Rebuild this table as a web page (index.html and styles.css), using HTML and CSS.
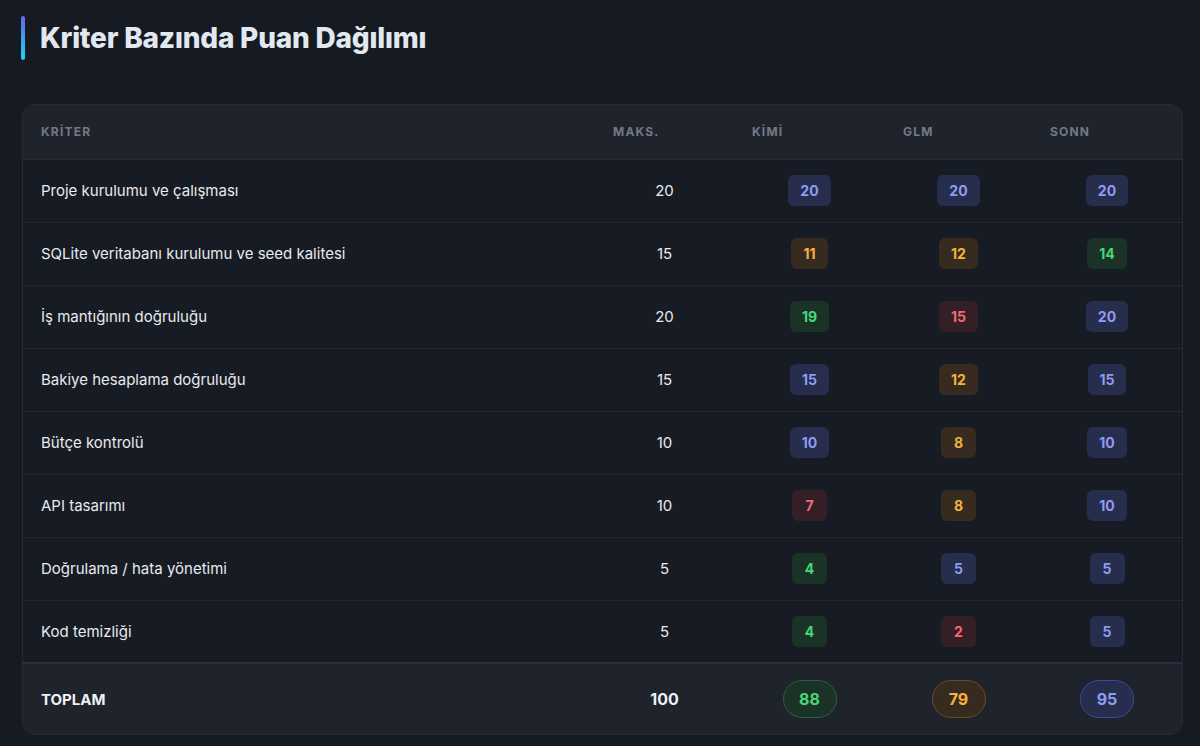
FILE: index.html
```html
<!DOCTYPE html>
<html lang="tr">
<head>
<meta charset="utf-8">
<link rel="stylesheet" href="styles.css">
</head>
<body>
<div class="page">
  <h1 class="title">Kriter Bazında Puan Dağılımı</h1>
  <div class="card">
    <table class="scores">
      <colgroup>
        <col class="c-name"><col class="c-max"><col class="c-m1"><col class="c-m2"><col class="c-m3">
      </colgroup>
      <thead>
        <tr><th>KRİTER</th><th>MAKS.</th><th>KİMİ</th><th>GLM</th><th>SONN</th></tr>
      </thead>
      <tbody>
        <tr><td>Proje kurulumu ve çalışması</td><td class="num">20</td><td class="num"><span class="b blue">20</span></td><td class="num"><span class="b blue">20</span></td><td class="num"><span class="b blue">20</span></td></tr>
        <tr><td>SQLite veritabanı kurulumu ve seed kalitesi</td><td class="num">15</td><td class="num"><span class="b orange">11</span></td><td class="num"><span class="b orange">12</span></td><td class="num"><span class="b green">14</span></td></tr>
        <tr><td>İş mantığının doğruluğu</td><td class="num">20</td><td class="num"><span class="b green">19</span></td><td class="num"><span class="b red">15</span></td><td class="num"><span class="b blue">20</span></td></tr>
        <tr><td>Bakiye hesaplama doğruluğu</td><td class="num">15</td><td class="num"><span class="b blue">15</span></td><td class="num"><span class="b orange">12</span></td><td class="num"><span class="b blue">15</span></td></tr>
        <tr><td>Bütçe kontrolü</td><td class="num">10</td><td class="num"><span class="b blue">10</span></td><td class="num"><span class="b orange">8</span></td><td class="num"><span class="b blue">10</span></td></tr>
        <tr><td>API tasarımı</td><td class="num">10</td><td class="num"><span class="b red">7</span></td><td class="num"><span class="b orange">8</span></td><td class="num"><span class="b blue">10</span></td></tr>
        <tr><td>Doğrulama / hata yönetimi</td><td class="num">5</td><td class="num"><span class="b green">4</span></td><td class="num"><span class="b blue">5</span></td><td class="num"><span class="b blue">5</span></td></tr>
        <tr><td>Kod temizliği</td><td class="num">5</td><td class="num"><span class="b green">4</span></td><td class="num"><span class="b red">2</span></td><td class="num"><span class="b blue">5</span></td></tr>
      </tbody>
      <tfoot>
        <tr><td class="total-label">TOPLAM</td><td class="num total-max">100</td><td class="num"><span class="pill green">88</span></td><td class="num"><span class="pill orange">79</span></td><td class="num"><span class="pill blue">95</span></td></tr>
      </tfoot>
    </table>
  </div>
</div>
</body>
</html>
```

FILE: styles.css
```css
* { box-sizing: border-box; }
html, body { margin: 0; padding: 0; }
body {
  background: #161a22;
  font-family: Inter, "Noto Sans", sans-serif;
  color: #e5e7eb;
}
.page {
  padding: 16px 17px 0 22px;
}
.title {
  margin: 0;
  position: relative;
  padding-left: 18px;
  font-size: 28px;
  line-height: 44px;
  font-weight: 800;
  letter-spacing: -0.2px;
  color: #e2e8f0;
}
.title::before {
  content: "";
  position: absolute;
  left: -1px;
  top: 0;
  width: 4px;
  height: 44px;
  border-radius: 2px;
  background: linear-gradient(180deg, #6366f1, #22d3ee);
}
.card {
  margin-top: 44px;
  width: 1161px;
  border: 1px solid #262b36;
  border-radius: 12px;
  overflow: hidden;
  background: #171b23;
}
.scores {
  width: 100%;
  border-collapse: collapse;
  table-layout: fixed;
}
.c-name { width: 572px; }
.c-max { width: 139px; }
.c-m1 { width: 151px; }
.c-m2 { width: 147px; }
.c-m3 { width: 150px; }
.scores th {
  background: #1f232c;
  height: 54px;
  padding: 0 18px;
  text-align: left;
  font-size: 12px;
  font-weight: 700;
  letter-spacing: 1.2px;
  color: #737987;
  border-bottom: 1px solid #262b36;
}
.scores tbody td {
  height: 63px;
  padding: 0 18px;
  font-size: 15px;
  color: #e8eaee;
  border-bottom: 1px solid #222731;
}
.scores tbody tr:last-child td { border-bottom: none; }
.scores td.num { text-align: center; }
.b {
  display: inline-block;
  min-width: 35px;
  height: 31px;
  line-height: 31px;
  padding: 0 12px;
  border-radius: 6px;
  font-size: 14px;
  font-weight: 700;
}
.b.blue, .pill.blue { background: #262d4d; color: #8e9cf0; }
.b.orange, .pill.orange { background: #372b20; color: #f5b23c; }
.b.green, .pill.green { background: #1b3327; color: #4ad57b; }
.b.red, .pill.red { background: #351f26; color: #f06a72; }
.scores tfoot td {
  background: #1f232c;
  height: 71px;
  padding: 0 18px;
  border-top: 2px solid #2a303c;
}
.total-label {
  font-size: 15px;
  font-weight: 700;
  color: #eef0f4;
}
.total-max {
  font-size: 16px;
  font-weight: 700;
  color: #eef0f4;
}
.pill {
  display: inline-block;
  min-width: 54px;
  height: 38px;
  line-height: 36px;
  padding: 0 12px;
  border-radius: 19px;
  font-size: 16px;
  font-weight: 700;
  border: 1px solid;
}
.pill.green { border-color: #2b6040; }
.pill.orange { border-color: #6b4a28; }
.pill.blue { border-color: #3d4a9a; }
```
